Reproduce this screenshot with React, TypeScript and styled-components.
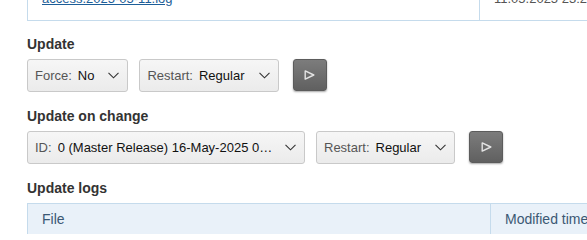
import React from "react";
import styled, { createGlobalStyle } from "styled-components";

const GlobalStyle = createGlobalStyle`
  html, body {
    margin: 0;
    padding: 0;
    overflow: hidden;
    background: #fff;
  }
  body {
    font-family: "Liberation Sans", Arial, sans-serif;
    font-size: 13px;
    color: #333;
  }
`;

const Page = styled.div`
  box-sizing: border-box;
  width: 100vw;
  height: 100vh;
  padding: 0 0 0 27px;
  overflow: hidden;
`;

const FilesTable = styled.div`
  margin-top: -18px;
  width: 660px;
  border-left: 1px solid #c5dbec;
  border-bottom: 1px solid #c5dbec;
`;

const TableRow = styled.div<{ $first: number }>`
  display: grid;
  grid-template-columns: ${({ $first }) => $first}px 1fr;
`;

const Cell = styled.div`
  padding: 9px 14px 13px;
  line-height: 16px;
  white-space: nowrap;
  overflow: hidden;
  color: #555;
  &:first-child {
    border-right: 1px solid #c5dbec;
  }
`;

const FileLink = styled.a`
  color: #1d5e98;
  text-decoration: underline;
`;

const Section = styled.section`
  margin-top: 16px;
  &:first-of-type {
    margin-top: 15px;
  }
`;

const SectionTitle = styled.h3`
  margin: 0 0 6px;
  font-size: 14px;
  line-height: 17px;
  font-weight: bold;
  color: #333;
`;

const Controls = styled.div`
  display: flex;
  align-items: flex-start;
  gap: 11px;
`;

const Select = styled.div<{ $width?: number }>`
  box-sizing: border-box;
  display: inline-flex;
  align-items: center;
  height: 33px;
  width: ${({ $width }) => ($width ? `${$width}px` : "auto")};
  padding: 0 8px 0 7px;
  border: 1px solid #c9c9c9;
  border-radius: 3px;
  background: linear-gradient(#f6f6f6, #ebebeb);
  font-size: 13px;
  white-space: nowrap;
  cursor: pointer;
`;

const SelectLabel = styled.span`
  color: #555;
  margin-right: 6px;
`;

const SelectValue = styled.span<{ $truncate?: boolean }>`
  color: #111;
  ${({ $truncate }) =>
    $truncate &&
    `
    flex: 1;
    min-width: 0;
    overflow: hidden;
    text-overflow: ellipsis;
  `}
`;

const Caret = styled.svg<{ $gap: number }>`
  flex: none;
  margin-left: ${({ $gap }) => $gap}px;
`;

const RunButton = styled.button`
  box-sizing: border-box;
  display: inline-flex;
  align-items: center;
  justify-content: center;
  width: 34px;
  height: 32px;
  margin-left: 3px;
  padding: 0;
  border: 1px solid #5c5c5c;
  border-radius: 3px;
  background: linear-gradient(#7c7c7c, #606060);
  box-shadow: 0 1px 2px rgba(0, 0, 0, 0.35);
  cursor: pointer;
`;

const LogsTable = styled.div`
  width: 660px;
  border-left: 1px solid #c5dbec;
  border-top: 1px solid #c5dbec;
`;

const HeadCell = styled.div`
  padding: 7px 14px;
  font-size: 14px;
  line-height: 16px;
  background: #e9f1f9;
  color: #3b5874;
  white-space: nowrap;
  &:first-child {
    border-right: 1px solid #c5dbec;
  }
`;

const ChevronDown = ({ gap }: { gap: number }) => (
  <Caret $gap={gap} width="11" height="7" viewBox="0 0 11 7">
    <polyline points="0.5,0.8 5.5,5.8 10.5,0.8" fill="none" stroke="#333" strokeWidth="1.1" />
  </Caret>
);

const PlayIcon = () => (
  <svg width="11" height="10" viewBox="0 0 11 10">
    <polygon points="1.2,0.9 9.8,5 1.2,9.1" fill="none" stroke="#e4e4e4" strokeWidth="1.4" strokeLinejoin="round" />
  </svg>
);

type DropdownProps = {
  label: string;
  value: string;
  width?: number;
};

const Dropdown = ({ label, value, width }: DropdownProps) => (
  <Select $width={width}>
    <SelectLabel>{label}</SelectLabel>
    <SelectValue $truncate={!!width}>{value}</SelectValue>
    <ChevronDown gap={width ? 10 : 14} />
  </Select>
);

const App = () => {
  return (
    <>
      <GlobalStyle />
      <Page>
        <FilesTable>
          <TableRow $first={452}>
            <Cell>
              <FileLink href="#">access.2025-05-11.log</FileLink>
            </Cell>
            <Cell>11.05.2025 23:29:41</Cell>
          </TableRow>
        </FilesTable>

        <Section>
          <SectionTitle>Update</SectionTitle>
          <Controls>
            <Dropdown label="Force:" value="No" />
            <Dropdown label="Restart:" value="Regular" />
            <RunButton type="button" aria-label="Run update">
              <PlayIcon />
            </RunButton>
          </Controls>
        </Section>

        <Section>
          <SectionTitle>Update on change</SectionTitle>
          <Controls>
            <Dropdown
              label="ID:"
              value="0 (Master Release) 16-May-2025 09:14:27"
              width={278}
            />
            <Dropdown label="Restart:" value="Regular" />
            <RunButton type="button" aria-label="Run update on change">
              <PlayIcon />
            </RunButton>
          </Controls>
        </Section>

        <Section>
          <SectionTitle>Update logs</SectionTitle>
          <LogsTable>
            <TableRow $first={463}>
              <HeadCell>File</HeadCell>
              <HeadCell>Modified time</HeadCell>
            </TableRow>
          </LogsTable>
        </Section>
      </Page>
    </>
  );
};

export default App;
